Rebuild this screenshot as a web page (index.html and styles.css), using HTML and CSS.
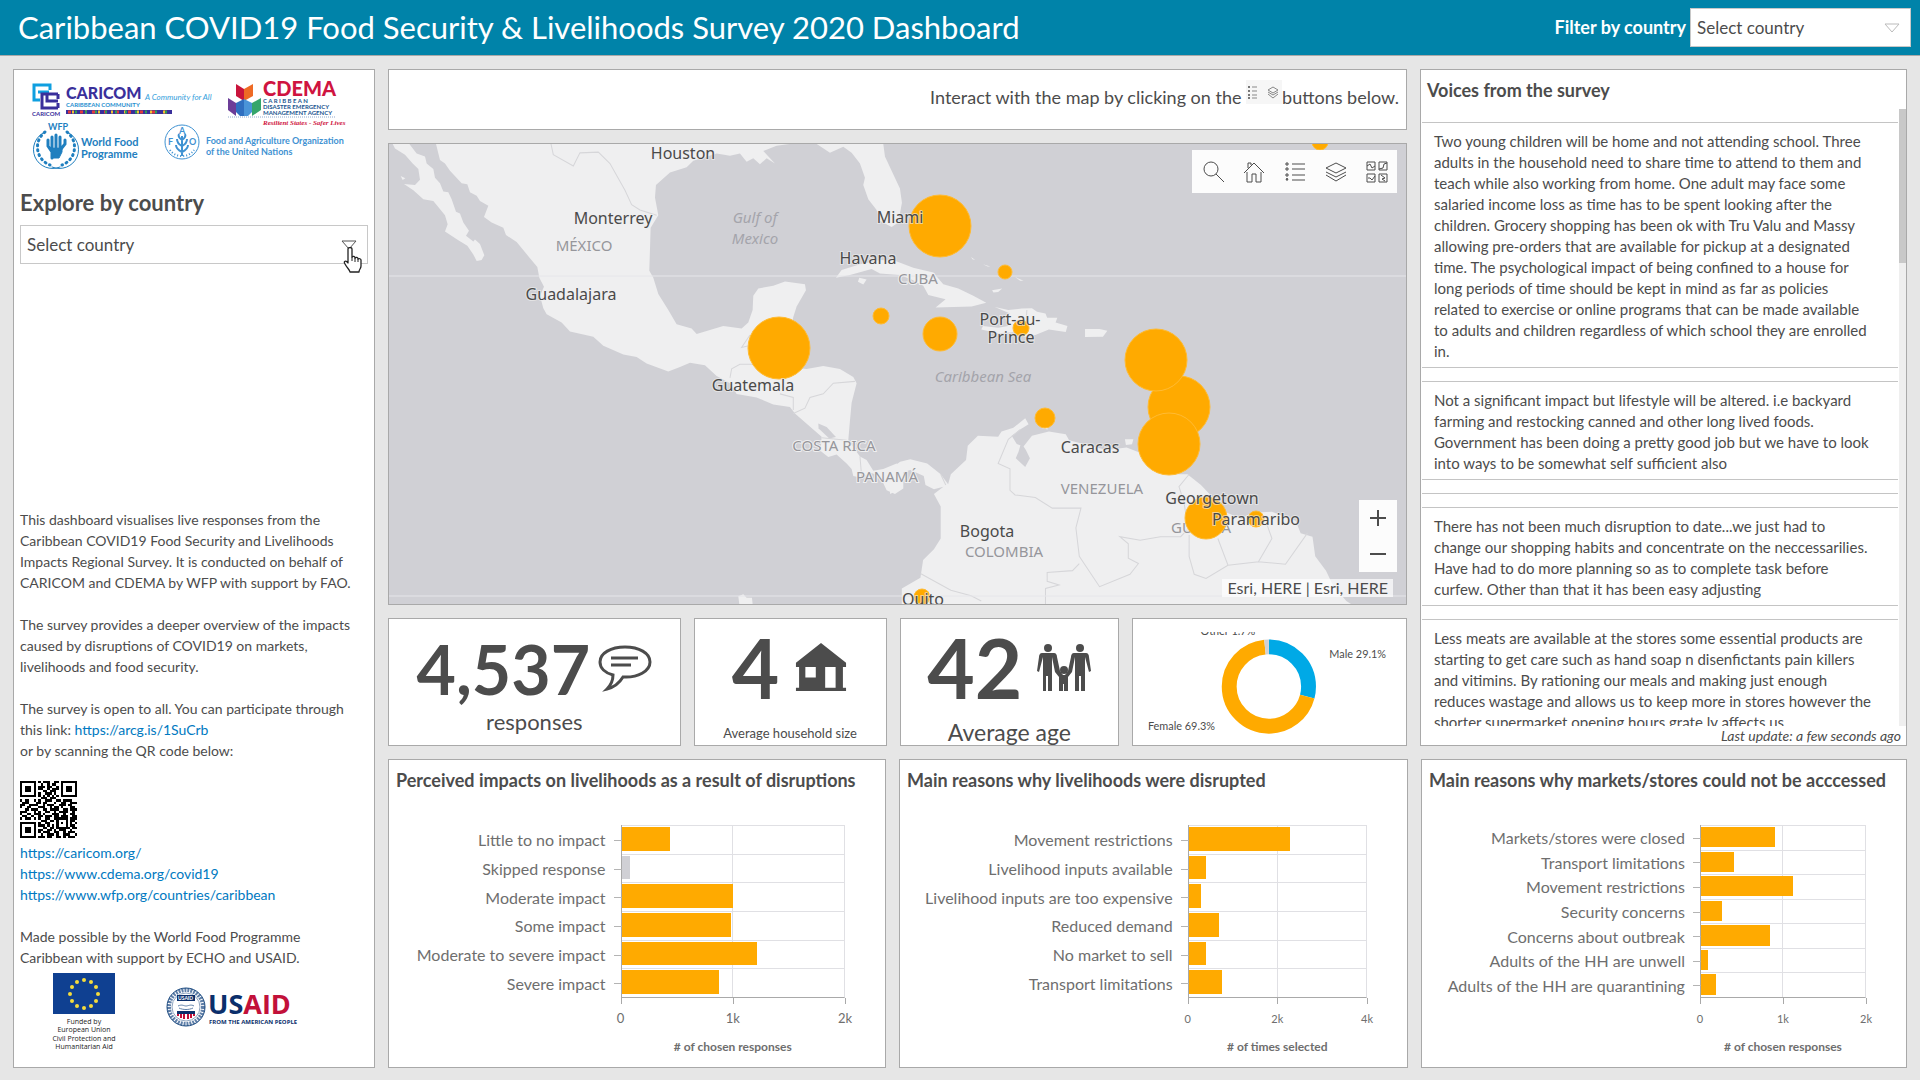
FILE: index.html
```html
<!DOCTYPE html>
<html lang="en">
<head>
    <meta charset="UTF-8">
    <meta name="viewport" content="width=device-width, initial-scale=1.0">
    <title>Caribbean COVID19 Food Security &amp; Livelihoods Survey 2020 Dashboard</title>
    <link rel="stylesheet" href="styles.css">
</head>
<body>
    <header class="header">
        <h1>Caribbean COVID19 Food Security &amp; Livelihoods Survey 2020 Dashboard</h1>
        <div class="header-filter">
            <label for="filter_country">Filter by country</label>
            <select id="filter_country" class="select select-header">
                <option>Select country</option>
            </select>
        </div>
    </header>

    <main class="dashboard">
        <!-- Left sidebar -->
        <aside class="panel sidebar">
            <svg class="logos" viewBox="0 0 360 100" role="img" aria-label="CARICOM, CDEMA, WFP and FAO">
                <!-- CARICOM -->
                <path d="M36 20v-5H20v15h6M24 22h11" fill="none" stroke="#0f9fe0" stroke-width="3"/>
                <path d="M44 24H28v14h16M33 28v-4M44 31H33v-6M44 24v5M44 38v-5" fill="none" stroke="#3a2f9b" stroke-width="3"/>
                <text x="18" y="46" class="logo-tiny" fill="#3a2f9b">CARICOM</text>
                <text x="52" y="29" class="logo-caricom">CARICOM</text>
                <text x="52" y="37" class="logo-micro" fill="#1f8fd0">CARIBBEAN COMMUNITY</text>
                <text x="131" y="30" class="logo-motto" fill="#35a0dc">A Community for All</text>
                <path d="M52 42h106" stroke="#3a2f9b" stroke-width="4"/>
                <path d="M54 42h104" stroke="#e23b3b" stroke-width="3" stroke-dasharray="3 9"/>
                <path d="M58 42h100" stroke="#f2c230" stroke-width="3" stroke-dasharray="2 11"/>
                <path d="M61 42h96" stroke="#2f9e57" stroke-width="3" stroke-dasharray="2 8"/>
                <!-- CDEMA -->
                <path d="M222 14l8 5v12l-8-5z" fill="#c9143c"/>
                <path d="M239 14l-9 5v12l9-5z" fill="#ee6a24"/>
                <path d="M214 28l8 5v13l-8-6z" fill="#6c3d98"/>
                <path d="M222 33l8-4v17h-4l-4-4z" fill="#2f6fc0"/>
                <path d="M238 33l-8-4v17h4l4-4z" fill="#4a94d8"/>
                <path d="M247 28l-9 5v13l9-6z" fill="#35a56b"/>
                <path d="M214 47h108" stroke="#8fa8cc" stroke-width="1" stroke-dasharray="1 1"/>
                <text x="249" y="26" class="logo-cdema">CDEMA</text>
                <text x="249" y="33" class="logo-micro" fill="#20558f">C A R I B B E A N</text>
                <text x="249" y="39" class="logo-micro" fill="#20558f">DISASTER EMERGENCY</text>
                <text x="249" y="45" class="logo-micro" fill="#20558f">MANAGEMENT AGENCY</text>
                <text x="249" y="55" class="logo-serif">Resilient States - Safer Lives</text>
                <!-- WFP -->
                <text x="34" y="60" class="logo-small" fill="#1f7fbf">WFP</text>
                <g fill="none" stroke="#1f7fbf" stroke-linecap="round">
                    <path d="M31 62a19 19 0 0 0 5 33M53 62a19 19 0 0 1-5 33" stroke-width="3" stroke-dasharray="1 4"/>
                    <path d="M31 62a19 19 0 0 0 15 35M53 62a19 19 0 0 1-15 35" stroke-width="1"/>
                    <path d="M38 88v-6l-4-6v-6M38 77v-10M42 77v-12M46 77v-10M47 79l4-5v-4" stroke-width="3"/>
                    <path d="M37 78h11v4l-3 6h-6z" fill="#1f7fbf"/>
                </g>
                <text x="67" y="76" class="logo-wfp">World Food</text>
                <text x="67" y="88" class="logo-wfp">Programme</text>
                <!-- FAO -->
                <circle cx="168" cy="72" r="17" fill="none" stroke="#3f92d2" stroke-width="1"/>
                <path d="M168 86V66M168 70c-3-2-4-4-3-6M168 70c3-2 4-4 3-6M168 76c-4-2-5-4-5-7M168 76c4-2 5-4 5-7M168 82c-4-2-6-4-6-7M168 82c4-2 6-4 6-7" fill="none" stroke="#3f92d2" stroke-width="2"/>
                <path d="M156 80c5 8 19 8 24 0" fill="none" stroke="#3f92d2" stroke-width="2" stroke-dasharray="1 2"/>
                <text x="154" y="75" class="logo-small" fill="#3f92d2">F</text>
                <text x="165" y="64" class="logo-small" fill="#3f92d2">A</text>
                <text x="175" y="75" class="logo-small" fill="#3f92d2">O</text>
                <text x="192" y="74" class="logo-small" fill="#3f92d2">Food and Agriculture Organization</text>
                <text x="192" y="85" class="logo-small" fill="#3f92d2">of the United Nations</text>
            </svg>

            <label class="explore-label" for="explore_country">Explore by country</label>
            <div class="explore-select">
                <select id="explore_country" class="select">
                    <option>Select country</option>
                </select>
                <svg class="cursor" viewBox="0 0 20 26" aria-hidden="true">
                    <path d="M6 2c0-2 4-2 4 0v8c1-1 3-1 3 1 1-1 3-1 3 1 1-1 3 0 3 1v6c0 3-2 3-2 6H8c0-2-3-4-5-8-2-3 1-4 3-1z" fill="#fff" stroke="#222" stroke-width="1.3" stroke-linejoin="round"/>
                    <path d="M10 10v4M13 11v4M16 12v3" stroke="#222" stroke-width="1"/>
                </svg>
            </div>

            <div class="about">
                <p>This dashboard visualises live responses from the Caribbean COVID19 Food Security and Livelihoods Impacts Regional Survey. It is conducted on behalf of CARICOM and CDEMA by WFP with support by FAO.</p>
                <p>The survey provides a deeper overview of the impacts caused by disruptions of COVID19 on markets, livelihoods and food security.</p>
                <p>The survey is open to all. You can participate through this link: <a href="https://arcg.is/1SuCrb">https://arcg.is/1SuCrb</a><br>or by scanning the QR code below:</p>
                <svg class="qr" viewBox="0 0 25 25" shape-rendering="crispEdges" role="img" aria-label="QR code">
                    <path fill="none" stroke="#000" d="M.5 .5h6v6h-6zM18.500 .5h6v6h-6zM.5 18.500h6v6h-6z"/>
                    <path d="M2 2h3v3h-3zM20 2h3v3h-3zM2 20h3v3h-3zM18 18h1v1h-1z"/>
                    <path fill="none" stroke="#000" d="M16.500 16.500h4v4h-4z"/>
                    <path stroke="#000" d="M8 .5h1m1 0h3m2 0h2M9 1.500h1m2 0h1m1 0h2M8 2.500h3m1 0h2m2 0h1M8 3.500h2m2 0h1m1 0h3M10 4.500h2m1 0h3M8 5.500h1m2 0h3m1 0h1M8 6.500h1m1 0h1m1 0h1m1 0h1m1 0h1M9 7.500h3m1 0h3M0 8.500h1m1 0h2m2 0h1m1 0h1m2 0h3m2 0h2m1 0h4M1 9.500h3m3 0h2m1 0h2m3 0h1m2 0h2m2 0h3M0 10.500h2m2 0h4m2 0h1m1 0h3m2 0h3m1 0h2M0 11.500h1m2 0h2m3 0h3m2 0h1m1 0h2m1 0h1m3 0h2M2 12.500h2m1 0h3m2 0h2m1 0h4m2 0h2m1 0h3M0 13.500h3m3 0h1m1 0h1m2 0h2m2 0h1m1 0h4m2 0h1M0 14.500h1m2 0h2m1 0h3m1 0h1m3 0h3m2 0h1m2 0h2M1 15.500h2m2 0h1m2 0h2m1 0h3m1 0h2m1 0h3m2 0h2M0 16.500h1m1 0h3m1 0h1m1 0h1m2 0h2m2 0h1m6 0h3M9 17.500h3m1 0h2m7 0h2M8 18.500h1m2 0h2m9 0h1m1 0h1M8 19.500h3m1 0h1m1 0h1m7 0h2M10 20.500h2m1 0h2m6 0h1m1 0h2M8 21.500h2m2 0h2m1 0h1m1 0h3m2 0h1M8 22.500h1m1 0h3m2 0h2m2 0h1m1 0h3M9 23.500h1m2 0h3m1 0h1m2 0h3m2 0h1M8 24.500h3m1 0h2m2 0h2m1 0h1m1 0h3"/>
                </svg>
                <ul class="links">
                    <li><a href="https://caricom.org/">https://caricom.org/</a></li>
                    <li><a href="https://www.cdema.org/covid19">https://www.cdema.org/covid19</a></li>
                    <li><a href="https://www.wfp.org/countries/caribbean">https://www.wfp.org/countries/caribbean</a></li>
                </ul>
                <p class="credit">Made possible by the World Food Programme Caribbean with support by ECHO and USAID.</p>
            </div>
            <svg class="donors" viewBox="0 0 360 80" role="img" aria-label="European Union and USAID">
                <path d="M39 0h62v41H39z" fill="#0f4091"/>
                <g fill="#f5dc3c">
                    <circle cx="70" cy="7" r="2"/><circle cx="77" cy="9" r="2"/><circle cx="82" cy="14" r="2"/><circle cx="84" cy="21" r="2"/>
                    <circle cx="82" cy="28" r="2"/><circle cx="77" cy="33" r="2"/><circle cx="70" cy="35" r="2"/><circle cx="63" cy="33" r="2"/>
                    <circle cx="58" cy="28" r="2"/><circle cx="56" cy="21" r="2"/><circle cx="58" cy="14" r="2"/><circle cx="63" cy="9" r="2"/>
                </g>
                <g class="logo-eu" text-anchor="middle">
                    <text x="70" y="51">Funded by</text>
                    <text x="70" y="59">European Union</text>
                    <text x="70" y="68">Civil Protection and</text>
                    <text x="70" y="76">Humanitarian Aid</text>
                </g>
                <circle cx="172" cy="34" r="17" fill="none" stroke="#5f7fa8" stroke-width="4" stroke-dasharray="2 1"/>
                <circle cx="172" cy="34" r="19" fill="none" stroke="#1b4a80" stroke-width="1"/>
                <circle cx="172" cy="34" r="14" fill="#fff" stroke="#8fa5c0" stroke-width="1"/>
                <path d="M163 22h18v6h-18zM163 38h18v3h-18z" fill="#0b2f6b"/>
                <text x="164" y="27" class="logo-seal">USAID</text>
                <path d="M164 33c4-2 6 0 8 0s5-2 8 0M165 35c4 2 10 2 14 0" fill="none" stroke="#5f7fa8" stroke-width="1"/>
                <path d="M164 41v2M167 41v4M170 41v5M174 41v5M177 41v4M180 41v2" stroke="#c2113a" stroke-width="2"/>
                <text x="194" y="41" class="logo-usaid"><tspan fill="#0b2f6b">US</tspan><tspan fill="#c2113a">AID</tspan></text>
                <text x="195" y="51" class="logo-people">FROM THE AMERICAN PEOPLE</text>
            </svg>
        </aside>

        <div class="content">
            <div class="top">
                <div class="center">
                    <section class="panel hint">
                        <p>Interact with the map by clicking on the
                            <svg class="hint-icons" viewBox="0 0 36 24" aria-hidden="true">
                                <path d="M0 0h36v24H0z" fill="#f6f6f6"/>
                                <path d="M2 7h2M2 11h2M2 15h2M2 18h2" stroke="#777" stroke-width="2"/>
                                <path d="M6 7h5M6 11h5M6 15h5M6 18h5" stroke="#888" stroke-width="1"/>
                                <path d="M27 7l5 3-5 3-5-3zM22 12l5 3 5-3M22 14l5 4 5-4" fill="none" stroke="#888" stroke-width="1"/>
                            </svg>buttons below.</p>
                    </section>

                    <section class="panel map">
                        <svg class="map-canvas" viewBox="0 0 1017 460" preserveAspectRatio="xMidYMid slice" role="img" aria-label="Survey responses by country">
                            <!-- Mexico and Central America -->
                            <g class="land" transform="translate(-9 -84) scale(.3333 .3571)">
                                <path d="M38 235L45 248 75 265 98 290 115 305 120 335 105 350 72 347 100 365 130 390 160 395 195 435 203 460 195 480 235 505 262 520 280 545 290 563 305 560 313 547 300 515 285 503 280 508 258 492 267 478 250 455 240 430 228 425 215 390 205 370 190 368 180 345 165 330 160 305 140 290 135 270 110 262 88 235Z"/>
                                <path d="M168 235L180 280 195 290 210 310 245 345 262 348 270 370 290 380 300 395 325 408 312 440 335 455 370 470 378 490 410 510 450 555 472 580 478 610 492 635 480 660 490 695 500 712 545 735 570 760 640 775 670 800 730 825 770 832 800 850 865 872 900 860 930 848 975 855 1010 885 1050 905 1070 935 1130 945 1180 965 1230 972 1245 990 1300 1035 1325 1055 1322 1095 1345 1112 1370 1105 1400 1130 1415 1145 1420 1165 1445 1170 1470 1155 1500 1165 1520 1205 1545 1215 1570 1200 1570 1145 1550 1130 1510 1145 1480 1150 1460 1120 1440 1110 1405 1065 1410 1010 1415 960 1430 905 1420 888 1380 865 1330 857 1280 865 1245 862 1225 800 1240 720 1250 690 1278 645 1275 628 1215 620 1180 632 1135 640 1120 660 1118 700 1105 735 1085 752 1030 745 950 767 935 752 890 740 865 700 835 655 820 610 808 590 812 470 835 435 825 385 828 350 870 315 920 300 940 282 1010 262 1050 268 1080 262 1100 285 1120 275 1140 292 1160 275 1185 290 1150 255 1190 240 1230 235Z"/>
                                <path d="M1310 235L1350 260 1390 243 1415 260 1440 290 1455 330 1450 350 1465 390 1490 420 1500 450 1535 468 1555 455 1566 400 1560 360 1535 310 1515 270 1510 235Z"/>
                                <path d="M1368 610L1385 588 1440 572 1500 560 1545 562 1600 582 1660 595 1690 628 1735 640 1780 660 1819 680 1775 690 1667 693 1697 670 1645 658 1630 632 1595 615 1560 602 1500 598 1475 585 1410 602Z"/>
                                <path d="M1438 610l22 5-10 14-16-8zM1075 1502l15-6 10 10 16 0 2 18h-40zM62 325l14 6-8 5z"/>
                                <path class="lake" d="M1315 1018l25 10 28 28-20 4-32-28z"/>
                            </g>
                            <g class="border" transform="translate(-9 -84) scale(.3333 .3571)">
                                <path d="M513 235L520 265 580 297 600 260 655 258 690 290 735 365 755 405 780 420 830 435M1050 890L1055 865 1080 852 1150 852 1150 790 1085 805 1110 770M1240 990L1275 975 1290 945 1330 935 1360 905 1425 900M1200 935L1240 945 1240 980M1325 1058L1400 1065M1440 1110L1445 1165"/>
                            </g>
                            <!-- Greater Antilles and South America -->
                            <g class="land" transform="translate(501 -84) scale(.338 .3571)">
                                <path d="M310 692L350 700 390 696 420 695 435 705 460 710 465 722 495 722 490 735 525 745 520 762 470 755 430 770 400 775 375 762 320 765 270 755 275 745 320 750 350 745 340 720 355 710Z"/>
                                <path d="M577 753L620 753 643 758 630 775 577 776ZM302 645l30-5-12 10-14 1zM240 552l12 8-8-2zM275 572l22 6-8 0zM370 608l25 10-10 0zM695 1062l25 0-4 14-18 2zM445 1030l20 0 2 5zM495 1012l12 4z"/>
                                <path d="M0 1145L30 1125 60 1118 110 1130 150 1160 172 1188 180 1160 225 1120 230 1080 260 1052 320 1055 330 1040 365 1030 400 1003 410 1020 385 1035 360 1052 375 1075 395 1082 420 1052 470 1040 520 1048 530 1065 600 1082 640 1092 700 1085 740 1100 790 1140 840 1160 880 1160 920 1190 960 1230 990 1265 1040 1285 1070 1268 1130 1265 1200 1290 1215 1325 1250 1335 1258 1390 1290 1430 1310 1470 1350 1515 1375 1530 35 1530 35 1480 90 1450 98 1400 130 1370 150 1340 150 1250 130 1215 158 1195 130 1202 105 1190 100 1165 60 1148 20 1160 20 1180 35 1200 0 1215Z"/>
                                <path class="lake" d="M388 1072L402 1092 414 1115 400 1140 372 1115 380 1098Z"/>
                            </g>
                            <g class="border" transform="translate(501 -84) scale(.338 .3571)">
                                <path d="M385 1035L350 1062 320 1130 355 1145 355 1205 370 1218 430 1225 480 1255 565 1255 550 1310 560 1390 620 1475 710 1440 735 1410 705 1395 705 1355 680 1335 740 1345 800 1335 860 1335 880 1315M560 1410L540 1430 465 1435 465 1460 500 1470 460 1480 460 1524M90 1438L180 1485 240 1500 270 1515M885 1160L855 1195 870 1240 880 1300M885 1330L885 1390 900 1440 935 1452 1000 1415 970 1340M1000 1415L1090 1405 1130 1340 1115 1300M1090 1405L1170 1412 1235 1325M150 1160L165 1190M405 700L400 760"/>
                            </g>
                            <path class="seam" d="M0 132h1017M0 452h1017"/>
                            <g class="map-label country" text-anchor="middle">
                                <text x="195" y="107">MÉXICO</text>
                                <text x="529" y="140">CUBA</text>
                                <text x="445" y="307">COSTA RICA</text>
                                <text x="498" y="338">PANAMÁ</text>
                                <text x="713" y="350">VENEZUELA</text>
                                <text x="812" y="389">GUYANA</text>
                                <text x="615" y="413">COLOMBIA</text>
                            </g>
                            <g class="map-label sea" text-anchor="middle">
                                <text x="366" y="79">Gulf of</text>
                                <text x="366" y="100">Mexico</text>
                                <text x="594" y="238">Caribbean Sea</text>
                            </g>
                            <g class="bubble">
                                <circle cx="551" cy="82" r="31"/>
                                <circle cx="616" cy="128" r="7"/>
                                <circle cx="492" cy="172" r="8"/>
                                <circle cx="551" cy="190" r="17"/>
                                <circle cx="390" cy="204" r="31"/>
                                <circle cx="632" cy="184" r="8"/>
                                <circle cx="790" cy="263" r="31"/>
                                <circle cx="767" cy="216" r="31"/>
                                <circle cx="780" cy="300" r="31"/>
                                <circle cx="656" cy="274" r="10"/>
                                <circle cx="817" cy="374" r="21"/>
                                <circle cx="867" cy="375" r="8"/>
                                <circle cx="533" cy="453" r="8"/>
                                <circle cx="931" cy="-2" r="8"/>
                            </g>
                            <g class="map-label city" text-anchor="middle">
                                <text x="294" y="15">Houston</text>
                                <text x="224" y="80">Monterrey</text>
                                <text x="182" y="156">Guadalajara</text>
                                <text x="364" y="247">Guatemala</text>
                                <text x="511" y="79">Miami</text>
                                <text x="479" y="120">Havana</text>
                                <text x="621" y="181">Port-au-</text>
                                <text x="622" y="199">Prince</text>
                                <text x="701" y="309">Caracas</text>
                                <text x="823" y="360">Georgetown</text>
                                <text x="867" y="381">Paramaribo</text>
                                <text x="598" y="393">Bogota</text>
                                <text x="534" y="461">Quito</text>
                            </g>
                        </svg>
                        <div class="map-tools">
                            <button type="button" aria-label="Search">
                                <svg viewBox="0 0 24 24"><circle cx="10" cy="9" r="7"/><path d="M15 14l8 8"/></svg>
                            </button>
                            <button type="button" aria-label="Home">
                                <svg viewBox="0 0 24 24"><path d="M5 12v10h5v-8h4v8h5V12M2 13L12 3l10 10M6 8V3h3v2"/></svg>
                            </button>
                            <button type="button" aria-label="Legend">
                                <svg viewBox="0 0 24 24"><path d="M9 4h13M9 9h13M9 15h13M9 20h13M3 3h2v2H3zM3 8h2v2H3zM3 14h2v2H3zM3 20l1-2 1 2z"/></svg>
                            </button>
                            <button type="button" aria-label="Layers">
                                <svg viewBox="0 0 24 24"><path d="M12 3l10 5-10 5L2 8zM2 12l10 5 10-5M2 15l10 6 10-6"/></svg>
                            </button>
                            <button type="button" aria-label="Basemaps">
                                <svg viewBox="0 0 24 24"><path d="M2 2h8v8H2zM14 2h8v8h-8zM2 14h8v8H2zM14 14h8v8h-8zM2 6l3-2 2 4 3-2M14 9l4-1 1-4 3-1M3 18h2l2 2 3-4M16 15l4 3-3 1 3 2"/></svg>
                            </button>
                        </div>
                        <div class="map-zoom">
                            <button type="button" aria-label="Zoom in">
                                <svg viewBox="0 0 16 16"><path d="M8 0v16M0 8h16"/></svg>
                            </button>
                            <button type="button" aria-label="Zoom out">
                                <svg viewBox="0 0 16 16"><path d="M0 8h16"/></svg>
                            </button>
                        </div>
                        <div class="map-credit">Esri, HERE | Esri, HERE</div>
                    </section>

                    <div class="cards">
                        <section class="panel card">
                            <div class="card-value">4,537
                                <svg class="icon-outline" viewBox="0 0 54 48" aria-hidden="true">
                                    <path d="M27 2C13 2 2 8 2 17c0 6 5 11 13 13 0 6-2 10-6 14 8-2 13-7 16-12 15 1 27-6 27-15S41 2 27 2z"/>
                                    <path d="M13 13h27M13 20h20"/>
                                </svg>
                            </div>
                            <div class="card-label">responses</div>
                        </section>
                        <section class="panel card card-big">
                            <div class="card-value">4
                                <svg viewBox="0 0 48 46" aria-hidden="true">
                                    <path fill-rule="evenodd" d="M24 0l24 19v4h-3v20h3v3H0v-3h3V23H0v-4zM9 23v10h10V23zM28 23v20h10V23z"/>
                                </svg>
                            </div>
                            <div class="card-label card-label-small">Average household size</div>
                        </section>
                        <section class="panel card card-big">
                            <div class="card-value">42
                                <svg viewBox="0 0 54 48" aria-hidden="true">
                                    <circle cx="11" cy="5" r="4"/><circle cx="43" cy="5" r="4"/><circle cx="27" cy="27" r="4"/>
                                    <path d="M5 10h12c2 0 3 2 3 4l3 14 3 4h2l3-4 3-14c0-2 1-4 3-4h12c2 0 3 2 3 4l2 14-2 1-4-15v34h-4V33h-2v15h-4V14l-3 15-4 5v14h-4v-7h-1v7h-4V34l-4-5-3-15v34h-4V33h-2v15H6V14L2 29l-2-1 2-14c0-2 1-4 3-4z"/>
                                </svg>
                            </div>
                            <div class="card-label card-label-large">Average age</div>
                        </section>
                        <section class="panel donut">
                            <svg viewBox="0 0 275 106" role="img" aria-label="Respondents by gender">
                                <g fill="none" stroke-width="15">
                                    <circle cx="137" cy="55" r="40" pathLength="1000" stroke="#00a9e6" stroke-dasharray="291 709" transform="rotate(-90 137 55)"/>
                                    <circle cx="137" cy="55" r="40" pathLength="1000" stroke="#ffaa00" stroke-dasharray="693 307" stroke-dashoffset="-291" transform="rotate(-90 137 55)"/>
                                    <circle cx="137" cy="55" r="40" pathLength="1000" stroke="#d0d0d5" stroke-dasharray="16 984" stroke-dashoffset="-984" transform="rotate(-90 137 55)"/>
                                </g>
                                <text x="68" y="3">Other 1.7%</text>
                                <text x="198" y="26">Male 29.1%</text>
                                <text x="15" y="99">Female 69.3%</text>
                            </svg>
                        </section>
                    </div>
                </div>

                <section class="panel voices">
                    <h2>Voices from the survey</h2>
                    <div class="voices-body">
                        <ul class="voices-list">
                            <li></li>
                            <li>Two young children will be home and not attending school. Three<br>
                                adults in the household need to share time to attend to them and<br>
                                teach while also working from home. One adult may face some<br>
                                salaried income loss as time has to be spent looking after the<br>
                                children. Grocery shopping has been ok with Tru Valu and Massy<br>
                                allowing pre-orders that are available for pickup at a designated<br>
                                time. The psychological impact of being confined to a house for<br>
                                long periods of time should be kept in mind as far as policies<br>
                                related to exercise or online programs that can be made available<br>
                                to adults and children regardless of which school they are enrolled<br>
                                in.</li>
                            <li></li>
                            <li>Not a significant impact but lifestyle will be altered. i.e backyard<br>
                                farming and restocking canned and other long lived foods.<br>
                                Government has been doing a pretty good job but we have to look<br>
                                into ways to be somewhat self sufficient also</li>
                            <li></li>
                            <li></li>
                            <li>There has not been much disruption to date...we just had to<br>
                                change our shopping habits and concentrate on the neccessarilies.<br>
                                Have had to do more planning so as to complete task before<br>
                                curfew. Other than that it has been easy adjusting</li>
                            <li></li>
                            <li>Less meats are available at the stores some essential products are<br>
                                starting to get care such as hand soap n disenfictants pain killers<br>
                                and vitimins. By rationing our meals and making just enough<br>
                                reduces wastage and allows us to keep more in stores however the<br>
                                shorter supermarket opening hours grate ly affects us.</li>
                        </ul>
                        <div class="scrollbar"><div class="scrollbar-thumb"></div></div>
                    </div>
                    <p class="updated">Last update: a few seconds ago</p>
                </section>
            </div>

            <div class="charts">
                <section class="panel chart chart-impacts">
                    <h2>Perceived impacts on livelihoods as a result of disruptions</h2>
                    <div class="chart-body">
                        <ul class="chart-labels">
                            <li>Little to no impact</li>
                            <li>Skipped response</li>
                            <li>Moderate impact</li>
                            <li>Some impact</li>
                            <li>Moderate to severe impact</li>
                            <li>Severe impact</li>
                        </ul>
                        <div class="plot">
                            <div class="row"><div class="bar" style="width: 22%"></div></div>
                            <div class="row"><div class="bar bar-grey" style="width: 4%"></div></div>
                            <div class="row"><div class="bar" style="width: 50%"></div></div>
                            <div class="row"><div class="bar" style="width: 49%"></div></div>
                            <div class="row"><div class="bar" style="width: 61%"></div></div>
                            <div class="row"><div class="bar" style="width: 44%"></div></div>
                        </div>
                        <div class="axis"><span>0</span><span>1k</span><span>2k</span></div>
                        <div class="axis-title"># of chosen responses</div>
                    </div>
                </section>
                <section class="panel chart chart-reasons">
                    <h2>Main reasons why livelihoods were disrupted</h2>
                    <div class="chart-body">
                        <ul class="chart-labels">
                            <li>Movement restrictions</li>
                            <li>Livelihood inputs available</li>
                            <li>Livelihood inputs are too expensive</li>
                            <li>Reduced demand</li>
                            <li>No market to sell</li>
                            <li>Transport limitations</li>
                        </ul>
                        <div class="plot">
                            <div class="row"><div class="bar" style="width: 57%"></div></div>
                            <div class="row"><div class="bar" style="width: 10%"></div></div>
                            <div class="row"><div class="bar" style="width: 7%"></div></div>
                            <div class="row"><div class="bar" style="width: 17%"></div></div>
                            <div class="row"><div class="bar" style="width: 10%"></div></div>
                            <div class="row"><div class="bar" style="width: 19%"></div></div>
                        </div>
                        <div class="axis"><span>0</span><span>2k</span><span>4k</span></div>
                        <div class="axis-title"># of times selected</div>
                    </div>
                </section>
                <section class="panel chart chart-markets">
                    <h2>Main reasons why markets/stores could not be acccessed</h2>
                    <div class="chart-body">
                        <ul class="chart-labels">
                            <li>Markets/stores were closed</li>
                            <li>Transport limitations</li>
                            <li>Movement restrictions</li>
                            <li>Security concerns</li>
                            <li>Concerns about outbreak</li>
                            <li>Adults of the HH are unwell</li>
                            <li>Adults of the HH are quarantining</li>
                        </ul>
                        <div class="plot">
                            <div class="row"><div class="bar" style="width: 45%"></div></div>
                            <div class="row"><div class="bar" style="width: 20%"></div></div>
                            <div class="row"><div class="bar" style="width: 56%"></div></div>
                            <div class="row"><div class="bar" style="width: 13%"></div></div>
                            <div class="row"><div class="bar" style="width: 42%"></div></div>
                            <div class="row"><div class="bar" style="width: 4%"></div></div>
                            <div class="row"><div class="bar" style="width: 9%"></div></div>
                        </div>
                        <div class="axis"><span>0</span><span>1k</span><span>2k</span></div>
                        <div class="axis-title"># of chosen responses</div>
                    </div>
                </section>
            </div>
        </div>
    </main>
</body>
</html>
```
FILE: styles.css
```css
* {
    box-sizing: border-box;
}
body {
    display: flex;
    flex-direction: column;
    height: 100vh;
    min-height: 960px;
    margin: 0;
    background-color: #e6e6e6;
    color: #4c4c4c;
    font-family: Lato, "Liberation Sans", sans-serif;
    font-size: 14px;
    line-height: 21px;
}
h1, h2, p, ul {
    margin: 0;
    padding: 0;
}
ul {
    list-style: none;
}
a {
    color: #0079c1;
    text-decoration: none;
}
svg {
    display: block;
}
.panel {
    min-width: 0;
    background-color: #fff;
    border: 1px solid #a9a9a9;
}
.panel h2 {
    font-size: 18px;
    font-weight: bold;
    line-height: 24px;
    white-space: nowrap;
}

/* Header */
.header {
    display: flex;
    justify-content: space-between;
    align-items: center;
    height: 56px;
    padding: 0 9px 0 18px;
    background-color: #0083a9;
    border-bottom: 1px solid #a9a9a9;
    color: #fff;
}
.header h1 {
    padding-bottom: 1px;
    font-size: 31px;
    font-weight: normal;
    line-height: 40px;
}
.header-filter {
    display: flex;
    align-items: center;
    gap: 4px;
    font-size: 18px;
    font-weight: bold;
}
.select {
    width: 100%;
    height: 39px;
    padding: 0 6px;
    appearance: none;
    border: 1px solid #c8c8c8;
    border-radius: 0;
    background: #fff url("data:image/svg+xml,%3Csvg viewBox='0 0 16 10' xmlns='http://www.w3.org/2000/svg'%3E%3Cpath d='M1 1h14L8 9z' fill='none' stroke='%23555'/%3E%3C/svg%3E") no-repeat right 10px center / 16px 10px;
    color: #4c4c4c;
    font-family: inherit;
    font-size: 17px;
}
.select-header {
    width: 221px;
    background-image: url("data:image/svg+xml,%3Csvg viewBox='0 0 16 10' xmlns='http://www.w3.org/2000/svg'%3E%3Cpath d='M1 1h14L8 9z' fill='none' stroke='%23bbb'/%3E%3C/svg%3E");
}

/* Page grid */
.dashboard {
    display: grid;
    flex: 1;
    grid-template-columns: 362fr 1519fr;
    gap: 13px;
    min-height: 0;
    padding: 13px 13px 12px;
}
.content {
    display: grid;
    grid-template-rows: minmax(0, 1fr) 309px;
    gap: 13px;
    min-width: 0;
    min-height: 0;
}
.top {
    display: grid;
    grid-template-columns: 1019fr 487fr;
    gap: 13px;
    min-height: 0;
}
.center {
    display: grid;
    grid-template-rows: 61px minmax(0, 1fr) 128px;
    gap: 13px;
    min-width: 0;
    min-height: 0;
}
.cards {
    display: grid;
    grid-template-columns: 293fr 193fr 220fr 275fr;
    gap: 13px;
}
.charts {
    display: grid;
    grid-template-columns: 498fr 509fr 486fr;
    gap: 13px;
}

/* Sidebar */
.sidebar {
    display: flex;
    flex-direction: column;
    padding-bottom: 14px;
}
.logos {
    width: 100%;
}
.logos text {
    font-weight: bold;
}
.logos .logo-caricom {
    fill: #3a2f9b;
    font-size: 16px;
    font-weight: 900;
}
.logos .logo-cdema {
    fill: #cf1440;
    font-size: 20px;
    font-weight: 900;
}
.logos .logo-wfp {
    fill: #1f7fbf;
    font-size: 11px;
}
.logo-small {
    font-size: 9px;
}
.logos .logo-motto {
    font-size: 8px;
    font-style: italic;
    font-weight: normal;
}
.logo-tiny,
.logo-micro {
    font-size: 6px;
}
.logos .logo-serif {
    fill: #cf1440;
    font-family: "Liberation Serif", serif;
    font-size: 7px;
    font-style: italic;
}
.explore-label {
    padding: 20px 6px 9px;
    font-size: 22px;
    font-weight: bold;
    line-height: 26px;
}
.explore-select {
    position: relative;
    margin: 0 6px;
}
.cursor {
    position: absolute;
    top: 22px;
    right: 6px;
    width: 20px;
    height: 26px;
}
.about {
    margin-top: auto;
    padding: 0 17px 0 6px;
}
.about p {
    margin-bottom: 21px;
}
.about .credit {
    margin-bottom: 5px;
}
.qr {
    width: 57px;
    height: 57px;
    margin: -1px 0 4px;
}
.links {
    margin-bottom: 21px;
}
.donors {
    width: 100%;
}
.logo-eu {
    fill: #222;
    font-family: "Open Sans", sans-serif;
    font-size: 7px;
}
.logo-seal {
    fill: #fff;
    font-size: 5px;
    font-weight: bold;
}
.logo-usaid {
    font-family: "Open Sans", sans-serif;
    font-size: 27px;
    font-weight: bold;
}
.logo-people {
    fill: #0b2f6b;
    font-family: "Open Sans", sans-serif;
    font-size: 6px;
    font-weight: bold;
}

/* Map */
.hint {
    display: flex;
    justify-content: flex-end;
    align-items: center;
    padding: 0 7px;
    font-size: 18px;
}
.hint p {
    padding-bottom: 12px;
}
.hint-icons {
    display: inline-block;
    width: 36px;
    height: 24px;
}
.map {
    position: relative;
    min-height: 0;
    overflow: hidden;
    background-color: #d0d0d5;
}
.map-canvas {
    width: 100%;
    height: 100%;
}
.land {
    fill: #efeff0;
}
.land .lake {
    fill: #d0d0d5;
}
.border {
    fill: none;
    stroke: #d6d6d9;
    stroke-width: 3px;
}
.seam {
    stroke: #e6e6ea;
}
.bubble {
    fill: #ffaa00;
    stroke: #ffbb33;
}
.map-label {
    font-family: "Noto Sans", sans-serif;
    paint-order: stroke;
    stroke-width: 2px;
}
.city {
    fill: #4a4a4a;
    stroke: rgba(240, 240, 240, 0.6);
    font-size: 16px;
}
.country {
    fill: #96969b;
    stroke: #efeff0;
    font-size: 15px;
}
.sea {
    fill: #a4a4ab;
    font-size: 15px;
    font-style: italic;
}
.map-tools,
.map-zoom {
    position: absolute;
    right: 9px;
    display: flex;
    background-color: rgba(255, 255, 255, 0.93);
}
.map-tools {
    top: 6px;
}
.map-zoom {
    bottom: 32px;
    flex-direction: column;
}
.map button {
    display: flex;
    justify-content: center;
    align-items: center;
    width: 41px;
    height: 43px;
    padding: 0;
    border: none;
    background: none;
    cursor: pointer;
}
.map button svg {
    width: 24px;
    height: 24px;
    fill: none;
    stroke: #4c4c4c;
    stroke-width: 1px;
}
.map .map-zoom button {
    width: 38px;
    height: 36px;
}
.map .map-zoom svg {
    width: 16px;
    height: 16px;
    stroke-width: 2px;
}
.map-credit {
    position: absolute;
    right: 13px;
    bottom: 7px;
    padding: 0 5px;
    background-color: rgba(255, 255, 255, 0.7);
    font-size: 16px;
    line-height: 18px;
}

/* Indicator cards */
.card {
    display: flex;
    flex-direction: column;
    justify-content: space-between;
    align-items: center;
    padding: 12px 0 10px;
}
.card-big {
    padding: 10px 0 3px;
}
.card-value {
    display: flex;
    align-items: center;
    gap: 8px;
    font-size: 68px;
    font-weight: bold;
    line-height: 76px;
}
.card-big .card-value {
    gap: 15px;
    font-size: 82px;
}
.card-value svg {
    width: 54px;
    height: 48px;
    fill: #4c4c4c;
}
.card-value .icon-outline {
    fill: none;
    stroke: #4c4c4c;
    stroke-width: 3px;
}
.card-label {
    font-size: 22px;
    line-height: 26px;
}
.card-label-small {
    font-size: 13px;
    line-height: 18px;
}
.card-label-large {
    font-size: 23px;
    line-height: 20px;
}
.donut {
    padding-top: 13px;
}
.donut svg {
    width: 100%;
    overflow: hidden;
}
.donut text {
    fill: #4c4c4c;
    font-size: 11px;
}

/* Voices */
.voices {
    display: flex;
    flex-direction: column;
    min-height: 0;
}
.voices h2 {
    padding: 8px 6px 7px;
}
.voices-body {
    display: flex;
    flex: 1;
    min-height: 0;
}
.voices-list {
    flex: 1;
    margin: 0 1px;
    overflow: hidden;
    font-size: 15px;
}
.voices-list li {
    padding: 8px 0 5px 12px;
    border-bottom: 1px solid #c4c4c4;
}
.scrollbar {
    width: 7px;
    background-color: #efefef;
}
.scrollbar-thumb {
    height: 25%;
    background-color: #c8c8c8;
}
.updated {
    padding-right: 5px;
    font-size: 14px;
    font-style: italic;
    line-height: 19px;
    text-align: right;
}

/* Bar charts */
.chart {
    padding: 8px 7px 0;
    color: #6e6e6e;
}
.chart h2 {
    color: #4c4c4c;
}
.chart-body {
    display: grid;
    grid-template-columns: minmax(0, 1fr) 50%;
    grid-template-rows: 173px 38px 24px;
    column-gap: 15px;
    padding: 33px 33px 0 0;
}
.chart-reasons .chart-body {
    grid-template-columns: minmax(0, 1fr) 39%;
}
.chart-markets .chart-body {
    grid-template-columns: minmax(0, 1fr) 38%;
}
.chart-labels {
    display: flex;
    flex-direction: column;
    font-size: 16px;
    text-align: right;
    white-space: nowrap;
}
.chart-labels li {
    display: flex;
    flex: 1;
    justify-content: flex-end;
    align-items: center;
}
.plot {
    display: flex;
    flex-direction: column;
    border-bottom: 1px solid #a9a9a9;
    border-left: 1px solid #a9a9a9;
    background: linear-gradient(#e0e0e4, #e0e0e4) no-repeat center / 1px 100%;
    border-right: 1px solid #e0e0e4;
}
.row {
    position: relative;
    display: flex;
    flex: 1;
    border-top: 1px solid #e0e0e4;
}
.row::before {
    position: absolute;
    top: 50%;
    left: -8px;
    width: 8px;
    height: 1px;
    background-color: #b4b4b4;
    content: "";
}
.bar {
    height: 86%;
    margin-top: 1px;
    background-color: #ffaa00;
}
.bar-grey {
    background-color: #d0d0d5;
}
.axis,
.axis-title {
    grid-column: 2;
}
.axis {
    display: flex;
    justify-content: space-between;
    margin: 0 -15px;
    font-size: 11px;
}
.chart-impacts .axis {
    font-size: 13px;
}
.axis span {
    position: relative;
    width: 30px;
    padding-top: 10px;
    text-align: center;
}
.axis span::before {
    position: absolute;
    top: 0;
    left: 15px;
    width: 1px;
    height: 6px;
    background-color: #a9a9a9;
    content: "";
}
.axis-title {
    font-size: 12px;
    font-weight: bold;
    text-align: center;
    white-space: nowrap;
}
```
